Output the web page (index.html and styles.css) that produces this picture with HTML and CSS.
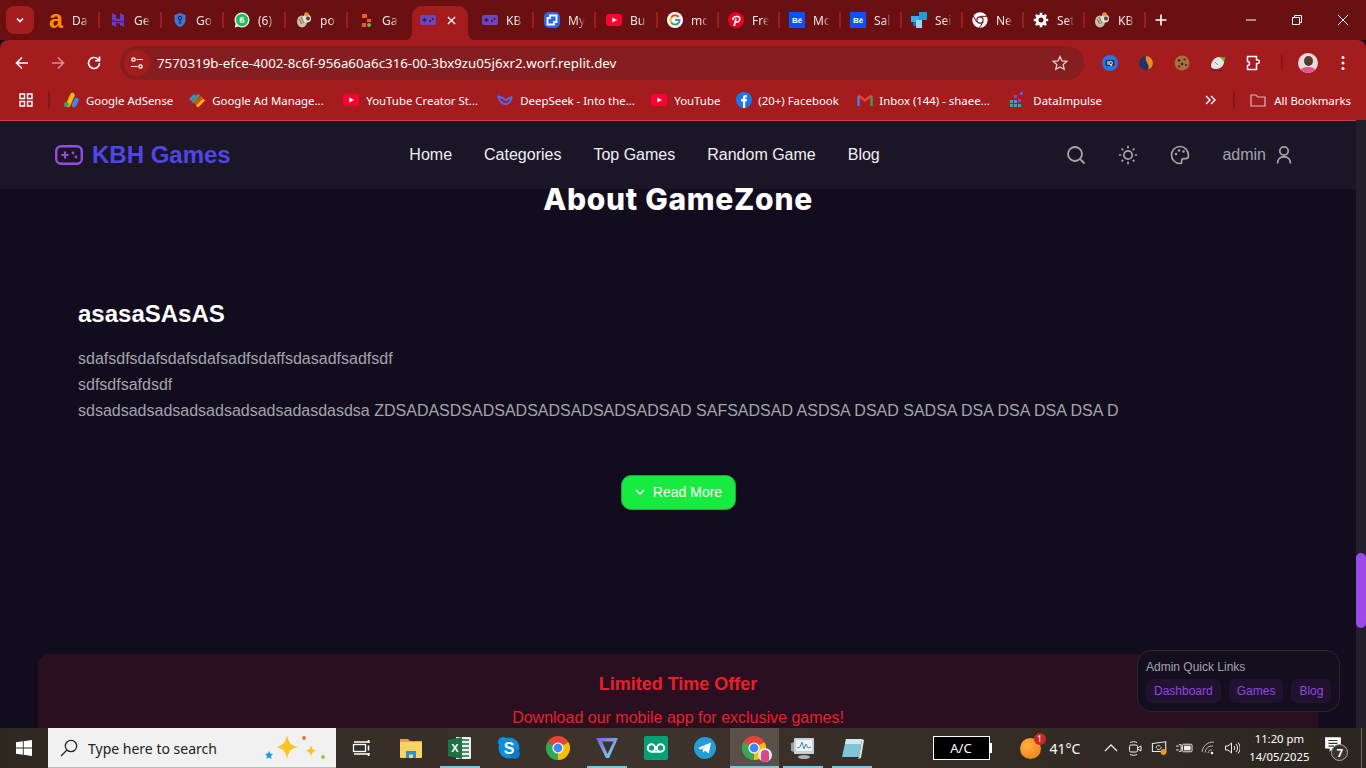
FILE: index.html
```html
<!DOCTYPE html>
<html lang="en">
<head>
<meta charset="utf-8">
<title>KBH Games</title>
<link rel="stylesheet" href="styles.css">
</head>
<body>
<svg class="sprite" xmlns="http://www.w3.org/2000/svg">
  <symbol id="chrome" viewBox="0 0 24 24">
    <path d="M12 12L1.6 6A12 12 0 0 1 22.4 6Z" fill="#ea4335"/>
    <path d="M12 12L22.4 6A12 12 0 0 1 12 24Z" fill="#fbbc04"/>
    <path d="M12 12L12 24A12 12 0 0 1 1.6 6Z" fill="#34a853"/>
    <circle cx="12" cy="12" r="5.6" fill="#fff"/><circle cx="12" cy="12" r="4.4" fill="#4285f4"/>
  </symbol>
  <symbol id="pad" viewBox="0 0 16 12">
    <rect x="0" y="1" width="16" height="10" rx="2" fill="#6e45b8"/>
    <path d="M2.500 6h4M4.500 4v4" stroke="#2d1a52" stroke-width="1.300"/>
    <circle cx="10" cy="7" r="1" fill="#2d1a52"/><circle cx="12.500" cy="5" r="1" fill="#2d1a52"/>
  </symbol>
  <symbol id="parrot" viewBox="0 0 16 16">
    <ellipse cx="6" cy="9.5" rx="5" ry="6" fill="#cdbfa8"/>
    <path d="M3 7l3 5M5 5l3 6" stroke="#8b7a60" stroke-width="1.2"/>
    <circle cx="11" cy="6.5" r="4" fill="#e6e2da"/><circle cx="12" cy="6.5" r="2" fill="#4d4438"/>
    <circle cx="10.5" cy="2.5" r="2.3" fill="#e89b2c"/>
  </symbol>
  <symbol id="yt" viewBox="0 0 16 12">
    <rect width="16" height="12" rx="3" fill="#ff0033"/><path d="M6.3 3.4L11 6l-4.7 2.6Z" fill="#fff"/>
  </symbol>
  <symbol id="be" viewBox="0 0 16 16">
    <rect width="16" height="16" fill="#0d50ff"/>
    <text x="8" y="10.6" text-anchor="middle" class="svg-text" font-size="8" font-weight="700" fill="#fff">Bē</text>
  </symbol>
</svg>

<div class="tabstrip">
  <div class="tab-menu">
    <svg viewBox="0 0 12 12" class="i12"><path d="M3 4.5L6 7.5L9 4.5" fill="none" stroke="#fff" stroke-width="1.7"/></svg>
  </div>
  <div class="tabs">
    <div class="tab"><span class="fav fav-a">a</span><span class="tab-title">Da</span></div>
    <div class="tab">
      <svg class="fav" viewBox="0 0 16 16"><path d="M2 1l4 2v3.500l4 .5V1l4 2v6.500L2 8.500ZM2 9.500l12 1V15l-4-2v-1.500l-4-.5V15l-4-2Z" fill="#5f3fc8"/></svg>
      <span class="tab-title">Ge</span>
    </div>
    <div class="tab">
      <svg class="fav" viewBox="0 0 16 16"><path d="M8 1l5.500 2v5c0 3.500-2.500 5.800-5.500 7C5 13.800 2.500 11.500 2.500 8V3Z" fill="#3f74d8"/><circle cx="8" cy="6" r="1.700" fill="none" stroke="#123" stroke-width="1"/><path d="M8 7.500V12" stroke="#123"/></svg>
      <span class="tab-title">Go</span>
    </div>
    <div class="tab">
      <svg class="fav" viewBox="0 0 16 16"><path d="M8 .5A7.500 7.500 0 0 1 8 15.500a7.500 7.500 0 0 1-3.700-1L.7 15.400l1-3.500A7.500 7.500 0 0 1 8 .5Z" fill="#fff"/><circle cx="8" cy="8" r="6.200" fill="#1dbf57"/><text x="8" y="11.300" text-anchor="middle" class="svg-text" font-size="9.500" font-weight="700" fill="#fff">6</text></svg>
      <span class="tab-title">(6)</span>
    </div>
    <div class="tab"><svg class="fav"><use href="#parrot"/></svg><span class="tab-title">po</span></div>
    <div class="tab">
      <svg class="fav" viewBox="0 0 16 16"><rect x="4" y="2" width="5" height="4" fill="#f2591c"/><rect x="9" y="7" width="4" height="3" fill="#f2591c"/><rect x="4" y="11" width="4" height="4" fill="#f2591c"/><circle cx="11" cy="13" r="2" fill="#5dc24a"/></svg>
      <span class="tab-title">Ga</span>
    </div>
    <div class="tab tab-active">
      <svg class="fav"><use href="#pad"/></svg>
      <svg class="tab-close" viewBox="0 0 10 10"><path d="M1 1l8 8M9 1l-8 8" stroke="#fff" stroke-width="1.500"/></svg>
    </div>
    <div class="tab"><svg class="fav"><use href="#pad"/></svg><span class="tab-title">KB</span></div>
    <div class="tab">
      <svg class="fav" viewBox="0 0 16 16"><rect width="16" height="16" rx="5" fill="#2a66ee"/><path d="M6 3.500h6.500V10H10v2.500H3.500V6H6Z" fill="none" stroke="#fff" stroke-width="1.800"/></svg>
      <span class="tab-title">My</span>
    </div>
    <div class="tab"><svg class="fav"><use href="#yt"/></svg><span class="tab-title">Bu</span></div>
    <div class="tab">
      <svg class="fav" viewBox="0 0 16 16"><circle cx="8" cy="8" r="8" fill="#fff"/><path d="M11.700 5A4.600 4.600 0 0 0 4.200 5.500" fill="none" stroke="#ea4335" stroke-width="2"/><path d="M4.200 5.500a4.600 4.600 0 0 0 0 5" fill="none" stroke="#fbbc04" stroke-width="2"/><path d="M4.200 10.500A4.600 4.600 0 0 0 11.500 11" fill="none" stroke="#34a853" stroke-width="2"/><path d="M8 8h4.600a4.600 4.600 0 0 1-1.100 3" fill="none" stroke="#4285f4" stroke-width="2"/></svg>
      <span class="tab-title">mc</span>
    </div>
    <div class="tab">
      <svg class="fav" viewBox="0 0 16 16"><circle cx="8" cy="8" r="8" fill="#e60023"/><path d="M6.200 14L8 6.500M5 8C3.500 4.500 12 2.500 11.800 7c-.2 3.500-3.500 3.800-4.300 2" fill="none" stroke="#fff" stroke-width="1.700"/></svg>
      <span class="tab-title">Fre</span>
    </div>
    <div class="tab"><svg class="fav"><use href="#be"/></svg><span class="tab-title">Mc</span></div>
    <div class="tab"><svg class="fav"><use href="#be"/></svg><span class="tab-title">Sal</span></div>
    <div class="tab">
      <svg class="fav" viewBox="0 0 16 16"><rect x="8" width="8" height="8" fill="#1f9bd8"/><rect y="4" width="8" height="6" fill="#2bb3e6"/><rect x="5" y="8" width="6" height="8" fill="#8fdcf5"/><rect x="2" y="10" width="3" height="4" fill="#1878a8"/></svg>
      <span class="tab-title">Sei</span>
    </div>
    <div class="tab">
      <svg class="fav" viewBox="0 0 24 24"><circle cx="12" cy="12" r="11.500" fill="#fff"/><circle cx="12" cy="12" r="5.500" fill="#6b1012"/><circle cx="12" cy="12" r="3.800" fill="#fff"/><path d="M12 6.500H23M7 14.800L2 6M16.800 15L11 23.500" stroke="#6b1012" stroke-width="1.500"/></svg>
      <span class="tab-title">Ne</span>
    </div>
    <div class="tab">
      <svg class="fav" viewBox="0 0 16 16"><circle cx="8" cy="8" r="4" fill="none" stroke="#fff" stroke-width="3"/><path d="M8 .8v3M8 12.200v3M.8 8h3M12.200 8h3M2.900 2.900L5 5M11 11l2.100 2.100M13.100 2.900L11 5M5 11l-2.100 2.100" stroke="#fff" stroke-width="2.600"/></svg>
      <span class="tab-title">Set</span>
    </div>
    <div class="tab"><svg class="fav"><use href="#parrot"/></svg><span class="tab-title">KB</span></div>
  </div>
  <svg class="new-tab" viewBox="0 0 12 12"><path d="M6 .5v11M.5 6h11" stroke="#fff" stroke-width="1.600"/></svg>
  <div class="win-controls">
    <div class="win-btn"><svg viewBox="0 0 12 12" class="i12"><path d="M1 6h10" stroke="#fff"/></svg></div>
    <div class="win-btn"><svg viewBox="0 0 12 12" class="i12"><path d="M3.500 3V1.500h7v7H9M1.500 3.500h7v7h-7Z" fill="none" stroke="#fff"/></svg></div>
    <div class="win-btn"><svg viewBox="0 0 12 12" class="i12"><path d="M1 1l10 10M11 1L1 11" stroke="#fff"/></svg></div>
  </div>
</div>

<div class="toolbar">
  <svg class="tool" viewBox="0 0 16 16"><path d="M14 8H2.500M8 2.500L2.500 8L8 13.500" fill="none" stroke="#fff" stroke-width="1.600"/></svg>
  <svg class="tool tool-off" viewBox="0 0 16 16"><path d="M2 8h11.500M8 2.500L13.500 8L8 13.500" fill="none" stroke="#d98f8f" stroke-width="1.600"/></svg>
  <svg class="tool" viewBox="0 0 16 16"><path d="M13.500 8A5.500 5.500 0 1 1 11.800 4L13.500 5.600M13.500 1.500v4.300H9.200" fill="none" stroke="#fff" stroke-width="1.600"/></svg>
  <div class="omnibox">
    <div class="site-chip">
      <svg viewBox="0 0 14 14" class="i14"><circle cx="3.500" cy="3.500" r="1.700" fill="none" stroke="#fff" stroke-width="1.200"/><path d="M6.500 3.500H13M1 10.500h6.500" stroke="#fff" stroke-width="1.200"/><circle cx="10.500" cy="10.500" r="1.700" fill="none" stroke="#fff" stroke-width="1.200"/></svg>
    </div>
    <span class="url">7570319b-efce-4002-8c6f-956a60a6c316-00-3bx9zu05j6xr2.worf.replit.dev</span>
    <svg class="star" viewBox="0 0 16 16"><path d="M8 1.500l2 4.400 4.800.5-3.600 3.200 1 4.700L8 11.900l-4.200 2.400 1-4.700L1.200 6.400 6 5.900Z" fill="none" stroke="#e6cfcf" stroke-width="1.300"/></svg>
  </div>
  <div class="extensions">
    <svg class="ext" viewBox="0 0 16 16"><circle cx="8" cy="8" r="8" fill="#2a74e6"/><rect x="3.500" y="5" width="9" height="6" rx="1.500" fill="#0e2a55"/><text x="8" y="10.200" text-anchor="middle" class="svg-text" font-size="5.500" font-weight="700" fill="#fff">IQ</text></svg>
    <svg class="ext" viewBox="0 0 16 16"><circle cx="8" cy="8" r="7" fill="#1f3566"/><path d="M8 1a7 7 0 0 1 2 13.700C13 10 6 7 8 1Z" fill="#f08a1d"/></svg>
    <svg class="ext" viewBox="0 0 16 16"><circle cx="8" cy="8" r="7.500" fill="#a9713f"/><circle cx="5" cy="5.500" r="1.300" fill="#3a2314"/><circle cx="10.500" cy="4.500" r="1.100" fill="#3a2314"/><circle cx="8" cy="9" r="1.300" fill="#3a2314"/><circle cx="12" cy="10" r="1.100" fill="#3a2314"/><circle cx="5" cy="11.500" r="1.100" fill="#3a2314"/></svg>
    <svg class="ext" viewBox="0 0 16 16"><path d="M1 11C1 6 5 2 9 2c3 0 5 2 5 5 0 4-4 7-8 7-3 0-5-1-5-3Z" fill="#e4e6e6"/><path d="M9 2c3 0 5 1.500 6.500-1L14 7c-1-2-3-3.500-5-5Z" fill="#58c022"/><path d="M5 7l3 3" stroke="#8a8a8a"/><path d="M1 15.500h11" stroke="#6a2020"/></svg>
    <svg class="ext" viewBox="0 0 16 16"><path d="M1.500 1.500h9V5h1.200a1.700 1.700 0 0 1 0 3.500h-1.200v6h-9V10.500a2 2 0 0 0 0-4Z" fill="none" stroke="#fff" stroke-width="1.500" stroke-linejoin="round"/></svg>
    <div class="vr vr-tool"></div>
    <div class="avatar"><div class="avatar-head"></div></div>
    <svg class="kebab" viewBox="0 0 4 16"><circle cx="2" cy="2.500" r="1.500" fill="#fff"/><circle cx="2" cy="8" r="1.500" fill="#fff"/><circle cx="2" cy="13.500" r="1.500" fill="#fff"/></svg>
  </div>
</div>

<div class="bookmarks">
  <svg class="apps" viewBox="0 0 14 14"><path d="M1 1h4.500v4.500H1ZM8.500 1H13v4.500H8.500ZM1 8.500h4.500V13H1ZM8.500 8.500H13V13H8.500Z" fill="none" stroke="#fff" stroke-width="1.400"/></svg>
  <div class="vr vr-first"></div>
  <div class="bm">
    <svg class="bm-i" viewBox="0 0 16 16"><path d="M5 13L9.500 3" stroke="#fbbc04" stroke-width="4.500" stroke-linecap="round"/><path d="M11 13l2.500-5" stroke="#4285f4" stroke-width="4.500" stroke-linecap="round"/><circle cx="3.500" cy="12.500" r="2.500" fill="#34a853"/></svg>
    <span>Google AdSense</span>
  </div>
  <div class="bm bm-cut">
    <svg class="bm-i" viewBox="0 0 16 16"><path d="M1 8l5-5" stroke="#4285f4" stroke-width="3"/><path d="M3.500 10.500L10 2.500" stroke="#34a853" stroke-width="3"/><path d="M6 12l7-7" stroke="#ea4335" stroke-width="3"/><path d="M8 14.500l7-7" stroke="#fbbc04" stroke-width="3"/></svg>
    <span>Google Ad Manage...</span>
  </div>
  <div class="bm bm-cut"><svg class="bm-i"><use href="#yt"/></svg><span>YouTube Creator St...</span></div>
  <div class="bm bm-cut">
    <svg class="bm-i" viewBox="0 0 16 16"><path d="M1 4c2 6 5 9 9 8 3-.8 4-4 5-7-1 1-2 1-3 1-2 3-5 2-6 0C4 5 2 5 1 4Z" fill="none" stroke="#4d6bfe" stroke-width="1.800"/></svg>
    <span>DeepSeek - Into the...</span>
  </div>
  <div class="bm"><svg class="bm-i"><use href="#yt"/></svg><span>YouTube</span></div>
  <div class="bm bm-fb">
    <svg class="bm-i" viewBox="0 0 16 16"><circle cx="8" cy="8" r="8" fill="#1877f2"/><path d="M7 16V9.500H5V7h2V5.500C7 3.500 8.300 2.800 11 3v2.200c-1.400 0-1.800 0-1.800 1V7H11l-.4 2.500H9.200V16Z" fill="#fff"/></svg>
    <span>(20+) Facebook</span>
  </div>
  <div class="bm bm-cut bm-mail">
    <svg class="bm-i" viewBox="0 0 16 16"><path d="M1.500 14V4" stroke="#4285f4" stroke-width="2.400"/><path d="M14.500 14V4" stroke="#34a853" stroke-width="2.400"/><path d="M1.500 3.500L8 8.500l6.500-5" fill="none" stroke="#ea4335" stroke-width="2.400"/></svg>
    <span>Inbox (144) - shaee...</span>
  </div>
  <div class="bm">
    <svg class="bm-i" viewBox="0 0 16 16"><g fill="#2aa6c9"><rect y="8" width="3" height="3"/><rect y="12" width="3" height="3"/><rect x="4" y="8" width="3" height="3"/><rect x="4" y="12" width="3" height="3"/><rect x="8" y="12" width="3" height="3"/></g><g fill="#6a55d8"><rect x="4" y="3" width="3" height="3"/><rect x="10" width="3" height="3"/><rect x="8" y="7" width="3" height="3"/></g></svg>
    <span>DataImpulse</span>
  </div>
  <svg class="bm-more" viewBox="0 0 12 12"><path d="M2 2l4 4-4 4M7 2l4 4-4 4" fill="none" stroke="#fff" stroke-width="1.400"/></svg>
  <div class="vr vr-more"></div>
  <div class="bm bm-all">
    <svg class="bm-i" viewBox="0 0 16 16"><path d="M1 3h5l1.500 2H15v9H1Z" fill="none" stroke="#d9b8b8" stroke-width="1.200"/></svg>
    <span>All Bookmarks</span>
  </div>
</div>

<div class="viewport">
  <div class="page">
    <header class="site-header">
      <div class="logo">
        <svg class="logo-icon" viewBox="0 0 28 20"><rect x="1.200" y="1.200" width="25.600" height="17.600" rx="5" fill="none" stroke="#9a4ae0" stroke-width="2.400"/><path d="M6.500 10h7M10 6.500v7" stroke="#9a4ae0" stroke-width="2.200"/><circle cx="18" cy="8" r="1.400" fill="#9a4ae0"/><circle cx="21" cy="12" r="1.400" fill="#9a4ae0"/></svg>
        <span class="logo-text">KBH Games</span>
      </div>
      <nav class="nav">
        <a>Home</a><a>Categories</a><a>Top Games</a><a>Random Game</a><a>Blog</a>
      </nav>
      <div class="actions">
        <svg class="act" viewBox="0 0 20 20"><circle cx="9" cy="9" r="7" fill="none" stroke="#a4a4ad" stroke-width="1.800"/><path d="M14 14l4.500 4.500" stroke="#a4a4ad" stroke-width="1.800"/></svg>
        <svg class="act" viewBox="0 0 20 20"><circle cx="10" cy="10" r="4.200" fill="none" stroke="#a4a4ad" stroke-width="1.700"/><path d="M10 .8v2.400M10 16.800v2.400M.8 10h2.400M16.800 10h2.400M3.500 3.500l1.700 1.700M14.800 14.800l1.700 1.700M16.500 3.500l-1.700 1.700M5.200 14.800l-1.700 1.700" stroke="#a4a4ad" stroke-width="1.700"/></svg>
        <svg class="act" viewBox="0 0 20 20"><path d="M10 1.500a8.500 8.500 0 0 0 0 17c1.500 0 2-1 1.700-2-.5-1.500.3-2.800 2-2.800h2c1.700 0 2.800-1.300 2.800-3.200 0-5.200-3.800-9-8.500-9Z" fill="none" stroke="#a4a4ad" stroke-width="1.700"/><circle cx="6" cy="9" r="1.300" fill="#a4a4ad"/><circle cx="9" cy="5.500" r="1.300" fill="#a4a4ad"/><circle cx="13.500" cy="6.500" r="1.300" fill="#a4a4ad"/></svg>
        <div class="user">
          <span>admin</span>
          <svg class="act" viewBox="0 0 20 20"><circle cx="10" cy="6" r="4.200" fill="none" stroke="#a4a4ad" stroke-width="1.800"/><path d="M3.500 18.500c0-9 13-9 13 0" fill="none" stroke="#a4a4ad" stroke-width="1.800"/></svg>
        </div>
      </div>
    </header>
    <main class="content">
      <h1 class="about-title">About GameZone</h1>
      <section class="article">
        <h2>asasaSAsAS</h2>
        <p>sdafsdfsdafsdafsdafsadfsdaffsdasadfsadfsdf<br>sdfsdfsafdsdf<br>sdsadsadsadsadsadsadsadsadasdasdsa ZDSADASDSADSADSADSADSADSADSAD SAFSADSAD ASDSA DSAD SADSA DSA DSA DSA DSA D</p>
      </section>
      <div class="more-row">
        <a class="read-more">
          <svg viewBox="0 0 12 12" class="i12"><path d="M2 4l4 4 4-4" fill="none" stroke="#fff" stroke-width="1.400"/></svg>
          Read More
        </a>
      </div>
      <section class="offer">
        <h3>Limited Time Offer</h3>
        <p>Download our mobile app for exclusive games!</p>
      </section>
    </main>
    <aside class="quick-links">
      <div class="ql-title">Admin Quick Links</div>
      <div class="ql-row"><a>Dashboard</a><a>Games</a><a>Blog</a></div>
    </aside>
  </div>
  <div class="scrollbar"><div class="thumb"></div></div>
</div>

<footer class="taskbar">
  <div class="start">
    <svg viewBox="0 0 16 16" class="start-icon"><path d="M0 2.300L6.800 1.300V7.600H0ZM7.700 1.200L16 0V7.600H7.700ZM0 8.400H6.800V14.700L0 13.700ZM7.700 8.400H16V16L7.700 14.800Z" fill="#fff"/></svg>
  </div>
  <div class="search">
    <svg viewBox="0 0 18 18" class="search-icon"><circle cx="11" cy="7" r="5.700" fill="none" stroke="#222" stroke-width="1.200"/><path d="M7 11L1 17" stroke="#222" stroke-width="1.300"/></svg>
    <span class="search-text">Type here to search</span>
    <svg viewBox="0 0 64 32" class="search-art">
      <path d="M23 3c1.500 8 4 10.500 11.500 12C27 16.500 24.500 19 23 27c-1.500-8-4-10.500-11.500-12C19 13.500 21.500 11 23 3Z" fill="#fcc31e"/>
      <path d="M47 13c.8 3.500 2 4.900 5.500 5.800C49 19.600 47.800 21 47 24.500c-.8-3.500-2-4.900-5.500-5.700C45 18 46.200 16.500 47 13Z" fill="#fcc31e"/>
      <path d="M5 19l1.200 2.600 2.800.4-2 2 .5 2.900L5 25.500l-2.500 1.400.5-2.900-2-2 2.800-.4Z" fill="#1e9be8"/>
      <circle cx="40" cy="6" r="1.900" fill="#ef6c35"/><circle cx="59" cy="25" r="1.900" fill="#8fc73e"/>
    </svg>
  </div>
  <div class="apps-row">
    <div class="app">
      <svg class="app-i" viewBox="0 0 24 24"><path d="M4 6h16M4 18h16" stroke="#fff" stroke-width="1.300"/><rect x="3.500" y="8.500" width="12" height="7" fill="none" stroke="#fff" stroke-width="1.300"/><path d="M18.500 4v3M18.500 9.500v5M18.500 17v3" stroke="#fff" stroke-width="1.500"/></svg>
    </div>
    <div class="app">
      <svg class="app-i" viewBox="0 0 24 24"><path d="M1 3h8l2 2h12v5H1Z" fill="#e0a52a"/><rect x="1" y="6" width="22" height="16" rx="1" fill="#fcd462"/><path d="M7 22v-7h10v7h-3v-3.500h-4V22Z" fill="#2a8ed8"/></svg>
    </div>
    <div class="app app-on">
      <svg class="app-i" viewBox="0 0 24 24"><path d="M8 1h14a1 1 0 0 1 1 1v20a1 1 0 0 1-1 1H8Z" fill="#e9f2ec"/><path d="M14 4h7M14 8h7M14 12h7M14 16h7M14 20h7" stroke="#207245" stroke-width="1.400"/><path d="M0 4l14-3v22L0 20Z" fill="#1f7244"/><text x="6.800" y="16" text-anchor="middle" class="svg-text" font-size="11" font-weight="700" fill="#fff">X</text></svg>
    </div>
    <div class="app">
      <svg class="app-i" viewBox="0 0 24 24"><circle cx="12" cy="12" r="10.500" fill="#0a8fe0"/><circle cx="6" cy="6" r="5" fill="#0a8fe0"/><circle cx="18" cy="18" r="5" fill="#0a78c8"/><text x="12" y="17.500" text-anchor="middle" class="svg-text" font-size="16" font-weight="700" fill="#fff">S</text></svg>
    </div>
    <div class="app"><svg class="app-i"><use href="#chrome"/></svg></div>
    <div class="app app-on">
      <svg class="app-i" viewBox="0 0 24 24"><defs><linearGradient id="proton" x1="0" y1="0" x2="1" y2="1"><stop offset="0" stop-color="#7a5cf0"/><stop offset="1" stop-color="#7fe6e0"/></linearGradient></defs><path d="M1 2h22L14 22h-3Z" fill="url(#proton)"/><path d="M7 5.500h11.500L12.500 18Z" fill="#3a3230"/></svg>
    </div>
    <div class="app">
      <svg class="app-i" viewBox="0 0 24 24"><rect width="24" height="24" rx="2" fill="#05a176"/><circle cx="7.500" cy="12" r="3.700" fill="none" stroke="#fff" stroke-width="2"/><circle cx="16.500" cy="12" r="3.700" fill="none" stroke="#fff" stroke-width="2"/><path d="M7.500 15.700h9" stroke="#fff" stroke-width="2"/></svg>
    </div>
    <div class="app">
      <svg class="app-i" viewBox="0 0 24 24"><circle cx="12" cy="12" r="11" fill="#239cd8"/><path d="M5 12l13-5.500-2.200 11-3.800-2.800-2 1.900-.4-3.500L16 8l-8 5.500Z" fill="#fff"/></svg>
    </div>
    <div class="app app-on app-current">
      <svg class="app-i"><use href="#chrome"/></svg>
      <span class="app-badge"><span class="app-badge-face"></span></span>
    </div>
    <div class="app app-on">
      <svg class="app-i" viewBox="0 0 24 24"><rect x="3" y="2" width="20" height="16" rx="1" fill="#c8d0d4"/><rect x="5" y="4" width="16" height="11" fill="#eef3f6"/><path d="M6 12l3-1 2-5 2 7 2-5 2 4 3-1" fill="none" stroke="#3a8cc8"/><path d="M0 7l3-1v10l-3-1Z" fill="#9aa0a4"/><ellipse cx="13" cy="21" rx="6" ry="2" fill="#aab0b4"/></svg>
    </div>
    <div class="app app-on">
      <svg class="app-i" viewBox="0 0 24 24"><path d="M6 3h16l-3 18H2Z" fill="#7fc4d8"/><path d="M6 3h16l-1 5H5Z" fill="#d6e6ea"/><path d="M22 3l-3 18-1 2 3-1 3-18Z" fill="#e6e2cc"/></svg>
    </div>
  </div>
  <div class="tray">
    <div class="ac-box"><span>A/C</span></div>
    <div class="weather">
      <div class="sun"><span class="sun-badge">1</span></div>
      <span class="temp">41°C</span>
    </div>
    <div class="tray-icons">
      <svg class="ti" viewBox="0 0 16 16"><path d="M2 11l6-6 6 6" fill="none" stroke="#eee" stroke-width="1.300"/></svg>
      <svg class="ti" viewBox="0 0 16 16"><rect x="2.500" y="5" width="8" height="7" rx="1.500" fill="none" stroke="#eee"/><path d="M10.500 8l3.500-2v5l-3.500-2M3 2.500c2-1 5-1 7 0M3 14.500c2 1 5 1 7 0" fill="none" stroke="#eee"/></svg>
      <svg class="ti ti-wide" viewBox="0 0 18 18"><path d="M1 4l15-2v11H1Z" fill="none" stroke="#eee" stroke-width="1.200"/><path d="M5 9a3 3 0 0 1 5-2M11 8a3 3 0 0 1-5 2" fill="none" stroke="#eee"/><circle cx="13.500" cy="13.500" r="3.300" fill="#f7941d"/></svg>
      <svg class="ti ti-wide" viewBox="0 0 18 16"><path d="M0 6h3M0 10h3M3 4.500h2.500v7H3M5.500 8H7" fill="none" stroke="#eee"/><rect x="7" y="4" width="10" height="8" rx="1" fill="none" stroke="#eee"/><rect x="8.500" y="5.500" width="7" height="5" fill="#eee"/></svg>
      <svg class="ti" viewBox="0 0 16 16"><path d="M1 12A11 11 0 0 1 13 2M4 12.500A7 7 0 0 1 12 6M7 13a3.500 3.500 0 0 1 4-3" fill="none" stroke="#b9b9b9"/><circle cx="11" cy="13" r="1.300" fill="#eee"/></svg>
      <svg class="ti ti-vol" viewBox="0 0 16 16"><path d="M1.500 6H4L7.500 3v10L4 10H1.500Z" fill="none" stroke="#eee"/><path d="M10 6a3 3 0 0 1 0 4M12 4a6 6 0 0 1 0 8M14 2.500a8 8 0 0 1 0 11" fill="none" stroke="#eee"/></svg>
    </div>
    <div class="clock"><div>11:20 pm</div><div>14/05/2025</div></div>
    <div class="notify">
      <svg viewBox="0 0 16 16" class="notify-i"><path d="M1 1h14v10H8l-3 3v-3H1Z" fill="#fff"/><path d="M4 4h8M4 6.500h8M4 9h5" stroke="#333"/></svg>
      <span class="notify-count">7</span>
    </div>
    <div class="show-desktop"></div>
  </div>
</footer>
</body>
</html>
```
FILE: styles.css
```css
* { box-sizing: border-box; }
html, body { margin: 0; padding: 0; height: 768px; overflow: hidden; }
body { display: flex; flex-direction: column; width: 1366px; font-family: "Liberation Sans", Arial, sans-serif; background: #120c1e; }
.sprite { display: none; }
.svg-text { font-family: "Liberation Sans", Arial, sans-serif; }
.i12 { width: 12px; height: 12px; display: block; }
.i14 { width: 14px; height: 14px; display: block; }

/* browser chrome */
.tabstrip { height: 40px; background: #6b1012; display: flex; align-items: flex-start; font-family: "Noto Sans", sans-serif; font-size: 12px; color: #f0e4e4; flex: none; }
.tab-menu { width: 28px; height: 28px; margin: 6px 4px 0 6px; background: #a51c1f; border-radius: 8px; display: flex; align-items: center; justify-content: center; flex: none; }
.tabs { display: flex; flex: none; }
.tab { width: 61px; height: 34px; margin-top: 6px; padding: 0 0 6px 9px; display: flex; align-items: center; gap: 8px; position: relative; flex: none; }
.tab:nth-child(-n+10) { width: 62px; padding-left: 10px; }
.tab::after { content: ""; position: absolute; right: 0; top: 6px; width: 2px; height: 16px; background: #9c1d20; }
.tab:nth-child(6)::after { display: none; }
.tab.tab-active { width: 56px; margin-left: 2px; margin-right: 4px; padding-left: 8px; gap: 11px; background: #a51c1f; border-radius: 10px 10px 0 0; }
.tab-active::before { content: ""; position: absolute; left: -8px; bottom: 0; width: 8px; height: 8px; background: radial-gradient(circle at 0 0, #6b1012 8px, #a51c1f 8.500px); }
.tab.tab-active::after { right: -8px; top: auto; bottom: 0; width: 8px; height: 8px; background: radial-gradient(circle at 100% 0, #6b1012 8px, #a51c1f 8.500px); }
.fav { width: 16px; height: 16px; flex: none; display: block; }
.fav-a { color: #ff8a00; font: 700 25px/14px "Liberation Sans", sans-serif; text-align: center; }
.tab-title { width: 17px; overflow: hidden; white-space: nowrap; -webkit-mask-image: linear-gradient(90deg, #000 60%, transparent); mask-image: linear-gradient(90deg, #000 60%, transparent); }
.tab-close { width: 9px; height: 9px; flex: none; }
.new-tab { width: 12px; height: 12px; margin: 14px 0 0 9px; flex: none; }
.win-controls { display: flex; margin-left: auto; }
.win-btn { width: 46px; height: 40px; display: flex; align-items: center; justify-content: center; }

.toolbar { height: 44px; background: #a51c1f; border-radius: 8px 8px 0 0; display: flex; align-items: center; padding: 2px 0 0 14px; gap: 20px; flex: none; }
.tool { width: 16px; height: 16px; flex: none; }
.omnibox { width: 964px; height: 34px; margin-left: -2px; background: #861e20; border-radius: 17px; display: flex; align-items: center; padding: 0 16px 0 4px; font-family: "Noto Sans", sans-serif; font-size: 13.300px; color: #fff; flex: none; }
.site-chip { width: 26px; height: 26px; border-radius: 50%; background: #a51c1f; display: flex; align-items: center; justify-content: center; flex: none; }
.url { margin-left: 7px; white-space: nowrap; }
.star { width: 16px; height: 16px; margin-left: auto; }
.extensions { display: flex; align-items: center; margin-left: -2px; flex: none; }
.ext { width: 16px; height: 16px; margin-right: 20px; flex: none; }
.vr { width: 2px; height: 16px; background: #85171a; flex: none; }
.vr-tool { margin: 0 15px 0 -1px; }
.avatar { width: 20px; height: 20px; border-radius: 50%; background: #e9dcdc; overflow: hidden; position: relative; flex: none; }
.avatar::after { content: ""; position: absolute; left: 2px; right: 2px; bottom: -3px; height: 9px; border-radius: 50%; background: #e0558f; }
.avatar-head { width: 9px; height: 10px; margin: 3px auto 0; border-radius: 50%; background: #5a3a30; }
.kebab { width: 4px; height: 16px; margin-left: 23px; flex: none; }

.bookmarks { height: 36px; background: #a51c1f; display: flex; align-items: center; padding: 0 15px 4px 19px; font-family: "Noto Sans", sans-serif; font-size: 11.400px; color: #fff; flex: none; }
.apps { width: 14px; height: 14px; flex: none; }
.vr-first { margin: 0 13px 0 15px; }
.bm { display: flex; align-items: center; gap: 7px; margin-right: 16px; white-space: nowrap; flex: none; }
.bm-cut span { width: 115px; }
.bm-fb { gap: 6px; }
.bm-fb span { width: 83px; }
.bm.bm-mail { gap: 6px; }
.bm-i { width: 16px; height: 16px; flex: none; }
.bm-more { width: 12px; height: 12px; margin-left: auto; flex: none; }
.vr-more { margin: 0 15px 0 17px; }
.bm.bm-all { margin: 0; gap: 8px; }

/* page */
.viewport { height: 608px; display: flex; overflow: hidden; flex: none; }
.page { width: 1356px; position: relative; overflow: hidden; flex: none; }
.site-header { height: 69px; background: #1b1528; border-top: 1px solid #c8403f; display: flex; align-items: center; justify-content: space-between; padding: 0 62px 0 55px; }
.logo { display: flex; align-items: center; gap: 9px; }
.logo-icon { width: 28px; height: 20px; }
.logo-text { font-size: 24px; font-weight: 700; color: #4f46e5; }
.nav { display: flex; gap: 32px; font-size: 16px; color: #f1f0f3; margin-right: 8px; }
.actions { display: flex; align-items: center; gap: 32px; color: #a4a4ad; font-size: 16px; }
.act { width: 20px; height: 20px; flex: none; display: block; }
.user { display: flex; align-items: center; gap: 8px; }
.content { padding: 0 38px; }
.about-title { margin: 0; font: 800 30px/20px Inter, sans-serif; color: #fff; text-align: center; letter-spacing: 0.700px; }
.article { padding: 90px 40px 0; }
.article h2 { margin: 0; font-size: 24px; line-height: 30px; font-weight: 700; color: #fff; }
.article p { margin: 17px 0 0; font-size: 16px; line-height: 26px; color: #a4a4ad; white-space: nowrap; }
.more-row { display: flex; justify-content: center; margin-top: 51px; }
.read-more { width: 115px; height: 35px; padding-bottom: 2px; background: #18eb3f; border: 1px solid #2a9c4a; border-radius: 10px; display: flex; align-items: center; justify-content: center; gap: 7px; font-size: 14px; color: #fff; }
.offer { margin-top: 144px; padding: 18px 0 0; height: 120px; background: #2a0f20; border-radius: 12px 12px 0 0; text-align: center; color: #e8202a; }
.offer h3 { margin: 0; font-size: 18px; line-height: 24px; font-weight: 700; }
.offer p { margin: 10px 0 0; font-size: 16px; line-height: 24px; }
.quick-links { position: absolute; left: 1137px; top: 530px; width: 203px; height: 62px; padding: 7px 8px 0; background: #140e1f; border: 1px solid #2c2735; border-radius: 14px; }
.ql-title { font-size: 12px; line-height: 18px; color: #a4a4ad; }
.ql-row { display: flex; gap: 8px; margin-top: 3px; }
.ql-row a { height: 24px; padding: 0 8px; background: #20132f; border-radius: 6px; font-size: 12px; line-height: 24px; color: #9346e0; }
.scrollbar { width: 10px; background: #241f2c; padding-top: 433px; flex: none; }
.thumb { height: 75px; background: #9b4be8; border-radius: 5px; }

/* taskbar */
.taskbar { height: 40px; background: linear-gradient(90deg, #2e2820, #3d342c 45%, #2b2620); display: flex; color: #fff; font-family: "Noto Sans", sans-serif; flex: none; }
.start { width: 48px; display: flex; align-items: center; justify-content: center; flex: none; }
.start-icon { width: 16px; height: 16px; }
.search { width: 288px; background: #f1f1f1; border-bottom: 1px solid #bbb; display: flex; align-items: center; padding-left: 12px; color: #222; font-size: 14px; flex: none; }
.search-icon { width: 18px; height: 18px; flex: none; }
.search-text { margin: 2px 0 0 10px; white-space: nowrap; }
.search-art { width: 64px; height: 32px; margin-left: auto; margin-right: 8px; flex: none; }
.apps-row { display: flex; padding-left: 1.500px; flex: none; }
.app { width: 49px; height: 40px; display: flex; align-items: center; justify-content: center; position: relative; flex: none; }
.app-i { width: 24px; height: 24px; display: block; }
.app-on::after { content: ""; position: absolute; left: 4px; right: 5px; bottom: 0; height: 2px; background: #80c4ec; }
.app-current { background: #5a504a; }
.app-current::after { left: 0; right: 0; }
.app-badge { position: absolute; left: 28px; top: 20px; width: 14px; height: 14px; border-radius: 50%; background: #f2e8e8; overflow: hidden; }
.app-badge-face { display: block; width: 8px; height: 14px; margin: 2px auto 0; border-radius: 4px; background: #d8488a; }
.tray { display: flex; align-items: center; flex: 1; min-width: 0; font-size: 14px; padding-left: 56px; }
.ac-box { width: 57px; height: 24px; background: #000; border: 1px solid #fff; display: flex; align-items: center; justify-content: center; font-size: 13px; position: relative; flex: none; }
.ac-box::after { content: ""; position: absolute; right: -3px; top: 6px; width: 2px; height: 10px; background: #fff; }
.weather { display: flex; align-items: center; gap: 9px; margin-left: 30px; flex: none; }
.sun { width: 21px; height: 21px; border-radius: 50%; background: radial-gradient(circle at 35% 35%, #fbb040, #f07810); position: relative; }
.sun-badge { position: absolute; right: -5px; top: -5px; width: 12px; height: 12px; border-radius: 50%; background: #c8282a; font-size: 8px; line-height: 12px; text-align: center; color: #fff; }
.temp { font-size: 14px; }
.tray-icons { display: flex; align-items: center; gap: 8px; margin-left: 23px; flex: none; }
.ti { width: 16px; height: 16px; flex: none; }
.ti-wide { width: 17px; height: 16px; }
.ti-vol { margin-left: -1px; }
.clock { width: 62px; margin-left: 8px; text-align: center; font-size: 11.300px; line-height: 18px; white-space: nowrap; flex: none; }
.clock div { display: flex; justify-content: center; }
.notify { width: 24px; height: 24px; position: relative; margin-left: 14px; flex: none; }
.notify-i { width: 18px; height: 18px; display: block; }
.notify-count { position: absolute; left: 7px; top: 8px; width: 17px; height: 17px; border: 1px solid #aaa; border-radius: 50%; background: #3a342c; font-size: 11px; line-height: 15px; text-align: center; font-weight: 700; }
.show-desktop { width: 1px; height: 40px; background: #6e675e; margin-left: auto; margin-right: 4px; flex: none; }
```
